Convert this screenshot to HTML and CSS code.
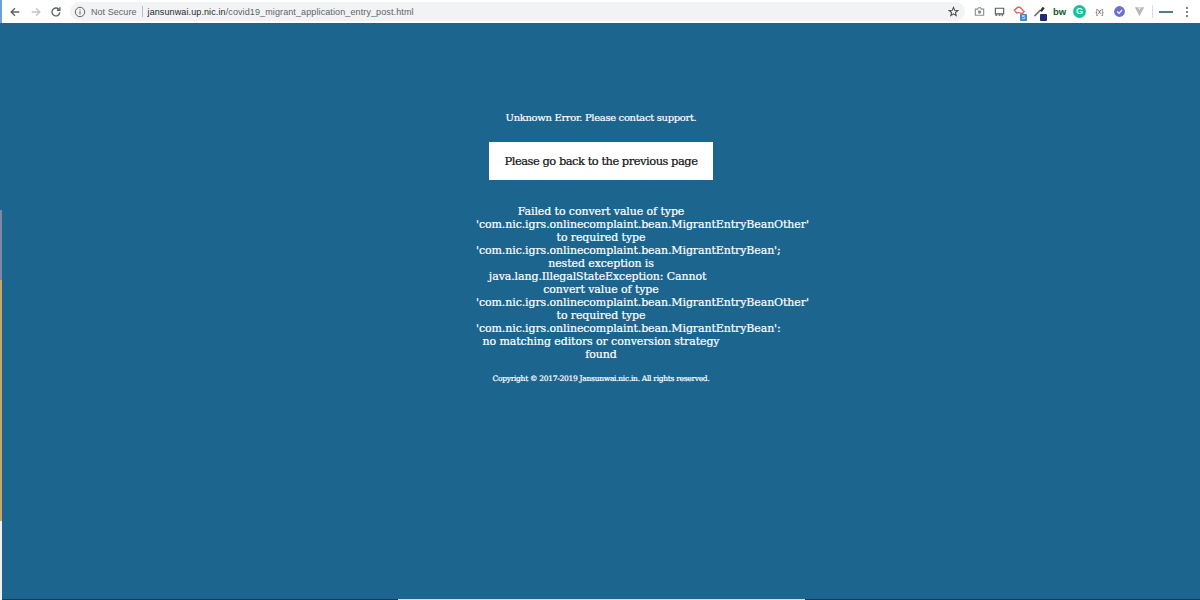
FILE: index.html
```html
<!DOCTYPE html>
<html lang="en">
<head>
<meta charset="utf-8">
<title>Jansunwai</title>
<link rel="stylesheet" href="styles.css">
</head>
<body>
<header class="toolbar">
  <nav class="nav">
    <svg class="ic" viewBox="0 0 14 14"><path d="M12 7H2.500M7 2.500 2.500 7 7 11.500" fill="none" stroke="#5f6368" stroke-width="1.600"/></svg>
    <svg class="ic" viewBox="0 0 14 14"><path d="M2 7h9.500M7 2.500 11.500 7 7 11.500" fill="none" stroke="#c2c5c9" stroke-width="1.600"/></svg>
    <svg class="ic" viewBox="0 0 14 14"><path d="M11.500 7.500A4.600 4.600 0 1 1 10.200 3.700M11.500 1.500v3.500H8" fill="none" stroke="#5f6368" stroke-width="1.600"/></svg>
  </nav>
  <div class="omnibox">
    <svg class="info" viewBox="0 0 12 12"><circle cx="6" cy="6" r="4.700" fill="none" stroke="#5f6368"/><path d="M6 5.300v3.200M6 3.400v1" stroke="#5f6368"/></svg>
    <span class="secure">Not Secure</span>
    <span class="sep"></span>
    <span class="url"><b>jansunwai.up.nic.in</b>/covid19_migrant_application_entry_post.html</span>
    <svg class="star" viewBox="0 0 14 14"><path d="M7 1.700 8.500 5.400l4 .3-3 2.600 1 3.900L7 10.100l-3.500 2.100 1-3.900-3-2.600 4-.3z" fill="none" stroke="#4a4d52" stroke-width="1.300"/></svg>
  </div>
  <div class="extensions">
    <svg class="ext" viewBox="0 0 14 14"><path d="M2.500 4.500h2.500l1-1.500h2l1 1.500h2.500v6.500h-9z" fill="none" stroke="#8a8e92" stroke-width="1.200"/><circle cx="7" cy="7.500" r="1.800" fill="#8a8e92"/></svg>
    <svg class="ext" viewBox="0 0 14 14"><path d="M2.500 3.500h9v6h-9zM2.500 11h2M6 11h2M10 9.500v2.500" fill="none" stroke="#55595e" stroke-width="1.200"/></svg>
    <span class="ext">
      <svg viewBox="0 0 14 14"><path d="M1.500 5.500 5 2.500h2.500L12 7l-2 2.500-4-1.500-2 .5z" fill="none" stroke="#e2685f" stroke-width="1.600"/></svg>
      <span class="badge blue">5</span>
    </span>
    <span class="ext">
      <svg viewBox="0 0 14 14"><path d="M1.500 12 8 5.500" stroke="#73777c" stroke-width="1.800"/><path d="M7.500 6l3-4 2 1.500-3 4z" fill="#2b2d30"/></svg>
      <span class="badge navy"></span>
    </span>
    <span class="ext bw">bw</span>
    <span class="ext grammarly">G</span>
    <span class="ext code">{x}</span>
    <span class="ext"><svg viewBox="0 0 14 14"><circle cx="7" cy="7" r="5.800" fill="#6a6fd0"/><path d="M4.500 7 6.500 9 9.800 5.200" fill="none" stroke="#fff" stroke-width="1.300"/></svg></span>
    <svg class="ext" viewBox="0 0 14 14"><path d="M2 2.500h10L7 12z" fill="#b5b7b8"/><path d="M5 2.500h4L7 6z" fill="#e4e5e5"/></svg>
    <span class="divider"></span>
    <span class="pill"></span>
    <span class="menu"><i></i><i></i><i></i></span>
  </div>
</header>
<div class="viewport">
  <div class="edge">
    <span class="edge-blue"></span>
    <span class="edge-grey"></span>
    <span class="edge-tan"></span>
    <span class="edge-white"></span>
  </div>
  <main class="page">
    <p class="status">Unknown Error. Please contact support.</p>
    <a class="back" href="#">Please go back to the previous page</a>
    <p class="detail">Failed to convert value of type<br>'com.nic.igrs.onlinecomplaint.bean.MigrantEntryBeanOther'<br>to required type<br>'com.nic.igrs.onlinecomplaint.bean.MigrantEntryBean';<br>nested exception is<br>java.lang.IllegalStateException: Cannot&nbsp;&nbsp;<br>convert value of type<br>'com.nic.igrs.onlinecomplaint.bean.MigrantEntryBeanOther'<br>to required type<br>'com.nic.igrs.onlinecomplaint.bean.MigrantEntryBean':<br>no matching editors or conversion strategy<br>found</p>
    <p class="copyright">Copyright © 2017-2019 Jansunwai.nic.in. All rights reserved.</p>
    <div class="spacer"></div>
    <div class="bottom-row"><div class="bottom-strip"></div></div>
  </main>
</div>
</body>
</html>
```
FILE: styles.css
```css
* { box-sizing: border-box; }
html, body { margin: 0; height: 100%; overflow: hidden; }
body { display: flex; flex-direction: column; font-family: "DejaVu Serif", serif; background: #1c658e; }

.toolbar { height: 23px; flex: none; display: flex; align-items: center; background: #fff; border-left: 2px solid #6f9fd8; font-family: "Liberation Sans", sans-serif; }
.nav { display: flex; gap: 8.500px; padding-left: 7px; width: 68px; flex: none; }
.ic { width: 12px; height: 12px; }
.omnibox { width: 895px; height: 19px; flex: none; display: flex; align-items: center; background: #f1f3f4; border-radius: 10px; padding: 0 6px 0 4px; font-size: 9px; color: #5f6368; }
.info { width: 12px; height: 12px; flex: none; }
.secure { margin-left: 5px; letter-spacing: .05px; }
.sep { width: 1px; height: 11px; background: #b9bcc0; margin: 0 5px; }
.url { letter-spacing: .11px; flex: 1; }
.url b { font-weight: normal; color: #25282b; }
.star { width: 11px; height: 11px; flex: none; }
.extensions { flex: 1; display: flex; align-items: center; padding-left: 8px; gap: 7px; }
.ext { width: 13px; height: 13px; flex: none; display: block; position: relative; font-size: 9px; }
.ext svg { display: block; width: 100%; height: 100%; }
.badge { position: absolute; right: -1px; bottom: -3px; width: 7px; height: 7px; border-radius: 1px; font-size: 6px; line-height: 7px; text-align: center; color: #fff; }
.blue { background: #3f85d8; }
.navy { background: #1c2a78; }
.bw { width: 13px; font-weight: bold; font-size: 9.500px; line-height: 13px; color: #12591f; }
.grammarly { border-radius: 50%; background: #15c39a; color: #fff; font-size: 9px; font-weight: bold; line-height: 13px; text-align: center; }
.code { font-size: 7px; line-height: 13px; text-align: center; color: #4a4d50; }
.divider { width: 1px; height: 13px; background: #dcdde0; flex: none; margin-left: -1px; }
.pill { width: 14px; height: 2px; background: #4f7f80; flex: none; margin-left: -1px; }
.menu { display: flex; flex-direction: column; gap: 2px; margin-left: 6px; }
.menu i { display: block; width: 2px; height: 2px; border-radius: 50%; background: #55595e; }

.viewport { flex: 1; display: flex; min-height: 0; }
.edge { width: 2px; flex: none; display: flex; flex-direction: column; }
.edge-blue { height: 187px; background: #1c658e; }
.edge-grey { height: 70px; background: #7a8aa0; }
.edge-tan { height: 241px; background: #c9a76c; }
.edge-white { flex: 1; background: #eef1f3; }

.page { flex: 1; display: flex; flex-direction: column; align-items: center; color: #fff; -webkit-text-stroke: .2px currentColor; }
.status { margin: 88px 0 0; font-size: 10px; line-height: 13px; letter-spacing: -.34px; }
.back { margin-top: 18px; width: 224px; height: 38px; display: flex; align-items: center; justify-content: center; background: #fff; color: #111; text-decoration: none; font-size: 11.500px; letter-spacing: -.5px; }
.detail { margin: 25px 0 0; width: 250px; font-size: 11px; line-height: 13px; letter-spacing: -.1px; text-align: center; white-space: nowrap; }
.copyright { margin: 12px 0 0; font-size: 7.500px; line-height: 11px; letter-spacing: -.28px; }
.spacer { flex: 1; }
.bottom-row { width: 100%; height: 1px; flex: none; display: flex; justify-content: center; background: #123f58; }
.bottom-strip { width: 407px; height: 1px; background: #bfe3f0; }
```
